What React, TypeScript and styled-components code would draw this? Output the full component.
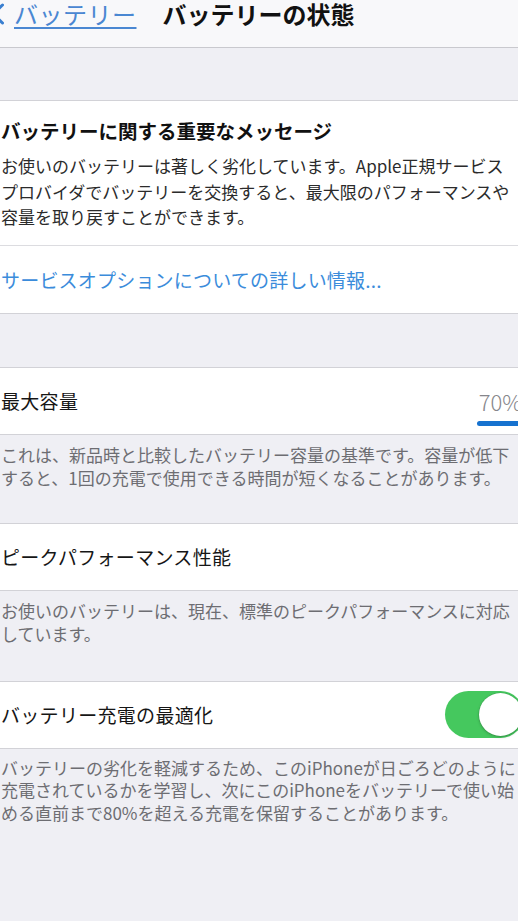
import React from "react"
import styled, { createGlobalStyle } from "styled-components"

const GlobalStyle = createGlobalStyle`
  html, body {
    margin: 0;
    padding: 0;
    background: #efeff4;
    overflow: hidden;
  }
  body {
    font-family: "Noto Sans CJK JP", "Noto Sans", sans-serif;
    -webkit-font-smoothing: antialiased;
  }
`

const Page = styled.div`
  width: 542px;
  min-height: 921px;
  background: #efeff4;
`

const NavBar = styled.header`
  height: 46px;
  padding-top: 1px;
  display: flex;
  align-items: flex-start;
  background: #f8f8fa;
  border-bottom: 1px solid #c9c9ce;
  box-sizing: content-box;
`

const BackChevron = styled.svg`
  margin-left: -10px;
  margin-top: 1px;
  flex-shrink: 0;
`

const BackLabel = styled.span`
  margin-left: 10px;
  font-size: 24px;
  line-height: 26px;
  color: #4a87d2;
  text-decoration: underline;
  text-decoration-thickness: 2px;
  text-underline-offset: 3px;
  letter-spacing: 0.5px;
`

const NavTitle = styled.h1`
  margin: 0 0 0 26px;
  font-size: 24px;
  line-height: 26px;
  font-weight: 700;
  color: #111;
`

const Gap = styled.div<{ h: number }>`
  height: ${(p) => p.h}px;
`

const Group = styled.section`
  background: #fff;
  border-top: 1px solid #d2d2d7;
  border-bottom: 1px solid #d2d2d7;
`

const MessageBlock = styled.div`
  padding: 17px 27px 15px 1px;
  border-bottom: 1px solid #dcdce0;
`

const MessageTitle = styled.h2`
  margin: 0 0 9px;
  font-size: 19.5px;
  line-height: 26px;
  font-weight: 700;
  color: #111;
`

const MessageBody = styled.p`
  margin: 0;
  font-size: 17px;
  line-height: 25.5px;
  color: #2b2b2b;
`

const Row = styled.div<{ h?: number }>`
  height: ${(p) => p.h ?? 66}px;
  display: flex;
  align-items: center;
  justify-content: space-between;
  padding: 0 18px 0 1px;
`

const LinkText = styled.span`
  font-size: 19px;
  color: #3b8cdb;
  letter-spacing: 0.2px;
`

const Label = styled.span`
  font-size: 19px;
  color: #161616;
  letter-spacing: 0.3px;
`

const Value = styled.span`
  position: relative;
  font-size: 22px;
  font-weight: 300;
  color: #86868b;
  margin-right: 2px;
`

const Highlight = styled.span`
  position: absolute;
  left: -2px;
  top: calc(100% + 4px);
  width: 52px;
  height: 5px;
  border-radius: 3px;
  background: #1672cf;
`

const Toggle = styled.div<{ on: boolean }>`
  width: 79px;
  height: 47px;
  border-radius: 24px;
  background: ${(p) => (p.on ? "#45c85e" : "#e5e5ea")};
  display: flex;
  align-items: center;
  justify-content: ${(p) => (p.on ? "flex-end" : "flex-start")};
  padding: 0 2px;
  box-sizing: border-box;
`

const Knob = styled.div`
  width: 43px;
  height: 43px;
  border-radius: 50%;
  background: #fff;
  box-shadow: 0 1px 3px rgba(0, 0, 0, 0.25), 0 0 0 0.5px rgba(0, 0, 0, 0.1);
`

const Footer = styled.p<{ bottom: number; lh?: number }>`
  margin: 0;
  padding: 8px 18px ${(p) => p.bottom}px 1px;
  font-size: 17px;
  line-height: ${(p) => p.lh ?? 23.5}px;
  color: #6d6d72;
`

export default function App() {
  return (
    <Page>
      <GlobalStyle />
      <NavBar>
        <BackChevron width="14" height="24" viewBox="0 0 14 24">
          <polyline
            points="12.5,3 3,12 12.5,21"
            fill="none"
            stroke="#3a7fd0"
            strokeWidth="3"
            strokeLinecap="round"
            strokeLinejoin="round"
          />
        </BackChevron>
        <BackLabel>バッテリー</BackLabel>
        <NavTitle>バッテリーの状態</NavTitle>
      </NavBar>

      <Gap h={52} />

      <Group>
        <MessageBlock>
          <MessageTitle>バッテリーに関する重要なメッセージ</MessageTitle>
          <MessageBody>
            お使いのバッテリーは著しく劣化しています。Apple正規サービスプロバイダでバッテリーを交換すると、最大限のパフォーマンスや容量を取り戻すことができます。
          </MessageBody>
        </MessageBlock>
        <Row h={67}>
          <LinkText>サービスオプションについての詳しい情報...</LinkText>
        </Row>
      </Group>

      <Gap h={53} />

      <Group>
        <Row>
          <Label>最大容量</Label>
          <Value>
            70%
            <Highlight />
          </Value>
        </Row>
      </Group>
      <Footer bottom={33}>
        これは、新品時と比較したバッテリー容量の基準です。容量が低下すると、1回の充電で使用できる時間が短くなることがあります。
      </Footer>

      <Group>
        <Row>
          <Label>ピークパフォーマンス性能</Label>
        </Row>
      </Group>
      <Footer bottom={35}>
        お使いのバッテリーは、現在、標準のピークパフォーマンスに対応しています。
      </Footer>

      <Group>
        <Row>
          <Label>バッテリー充電の最適化</Label>
          <Toggle on>
            <Knob />
          </Toggle>
        </Row>
      </Group>
      <Footer bottom={40} lh={22.5}>
        バッテリーの劣化を軽減するため、このiPhoneが日ごろどのように充電されているかを学習し、次にこのiPhoneをバッテリーで使い始める直前まで80%を超える充電を保留することがあります。
      </Footer>
    </Page>
  )
}
